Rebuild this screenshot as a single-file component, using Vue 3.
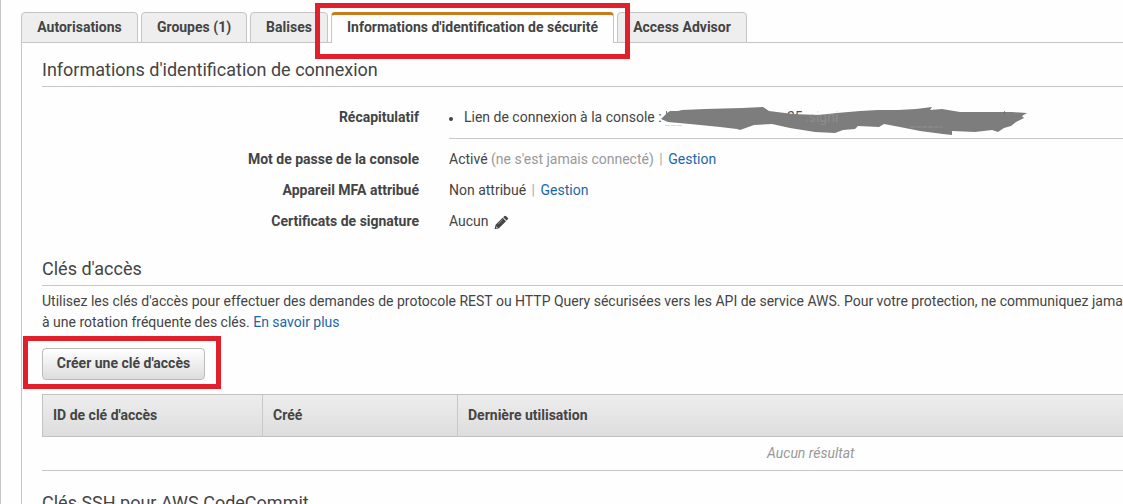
<script setup>
const tabs = [
  { label: 'Autorisations', width: 117 },
  { label: 'Groupes (1)', width: 106 },
  { label: 'Balises', width: 78 },
  { label: "Informations d'identification de sécurité", width: 283, active: true },
  { label: 'Access Advisor', width: 130 },
]
const columns = ["ID de clé d'accès", 'Créé', 'Dernière utilisation']
</script>

<template>
  <div class="page">
    <nav class="tabs">
      <div
        v-for="tab in tabs"
        :key="tab.label"
        class="tab"
        :class="{ active: tab.active }"
        :style="{ width: tab.width + 'px' }"
      >
        <span>{{ tab.label }}</span>
        <i v-if="tab.active" class="marker tab-marker"></i>
      </div>
    </nav>

    <main class="panel">
      <h2>Informations d'identification de connexion</h2>
      <dl class="details">
        <dt>Récapitulatif</dt>
        <dd class="summary">
          <span class="bullet"></span>
          <span>Lien de connexion à la console :</span>
          <svg class="scribble" width="370" height="32" viewBox="0 0 370 32">
            <text class="trace" x="127" y="18">25</text>
            <path fill="none" stroke="#777" d="M6.5 7 V12" />
            <path
              fill="#7d7d7d"
              d="M1 15 L7 9 L10 7 L18 7 L22 6 L45 5 L82 4 L103 3 L109 7 L133 10 L158 11 L177 9 L200 7 L218 6 L238 6 L256 5 L272 3 L270 6 L282 5 L300 8 L325 8 L352 8 L367 9 L362 12 L364 14 L356 18 L351 22 L344 24 L338 28 L332 26 L315 28 L292 27 L292 31 L283 30 L260 27 L240 23 L224 20 L219 23 L198 22 L195 25 L183 26 L175 29 L155 28 L130 24 L112 20 L94 21 L80 26 L77 25 L60 23 L30 20 L8 18 Z"
            />
            <path fill="none" stroke="#aaa" stroke-dasharray="5 1" d="M5 21.5 H22 M250 23 H282" opacity=".45" />
            <path fill="none" stroke="#5d5d5d" opacity=".7" d="M344.5 7 v3" />
            <text class="trace light" x="145" y="18">.signi</text>
          </svg>
        </dd>
        <dt>Mot de passe de la console</dt>
        <dd>Activé <span class="muted">(ne s'est jamais connecté)</span><span class="bar">|</span><a>Gestion</a></dd>
        <dt>Appareil MFA attribué</dt>
        <dd>Non attribué<span class="bar">|</span><a>Gestion</a></dd>
        <dt>Certificats de signature</dt>
        <dd class="certificate">
          Aucun
          <svg width="15" height="15" viewBox="0 0 15 15">
            <path fill="#444" d="M10.2 1.2 Q11.2 .4 12.2 1.2 L13.7 2.7 Q14.5 3.7 13.6 4.6 L12.6 5.6 L9.2 2.2 Z M8.6 2.8 L12 6.2 L4.9 13.2 L.6 14.3 L1.6 9.8 Z" />
            <path fill="none" stroke="#aaa" stroke-width=".8" d="M4.2 9 L8.4 4.9" />
            <path fill="#ddd" d="M2.3 11.2 L3.8 12.7 L2 13.1 Z" />
          </svg>
        </dd>
      </dl>

      <h2>Clés d'accès</h2>
      <p>
        Utilisez les clés d'accès pour effectuer des demandes de protocole REST ou HTTP Query sécurisées vers les API de service AWS. Pour votre protection, ne communiquez jama<br />
        à une rotation fréquente des clés. <a>En savoir plus</a>
      </p>
      <div class="action">
        <button>Créer une clé d'accès</button>
        <i class="marker button-marker"></i>
      </div>
      <div class="table-head">
        <div v-for="column in columns" :key="column">{{ column }}</div>
      </div>
      <div class="empty">Aucun résultat</div>
      <h2 class="ssh">Clés SSH pour AWS CodeCommit</h2>
    </main>
  </div>
</template>

<style>
body { margin: 0; overflow: hidden; }
</style>

<style scoped>
* { box-sizing: border-box; }
.page {
  width: 1123px;
  height: 504px;
  overflow: hidden;
  padding: 12px 0 0 20px;
  border-left: 1px solid #c4c4c4;
  background: #fefefe;
  color: #444;
  font: 14px/21px Roboto, "Liberation Sans", sans-serif;
}
.tabs { display: flex; gap: 3px; height: 31px; position: relative; z-index: 1; }
.tab {
  position: relative;
  height: 31px;
  border: 1px solid #c5c5c5;
  border-radius: 4px 4px 0 0;
  background: #eee;
  font-weight: 700;
  line-height: 29px;
  text-align: center;
  white-space: nowrap;
}
.tab.active {
  z-index: 2;
  border-top: 3px solid #c77c1e;
  border-bottom: 0;
  background: #fefefe;
  line-height: 25px;
}
.marker { position: absolute; border: 5px solid #e2202c; pointer-events: none; }
.tab-marker { left: -17px; top: -12px; width: 315px; height: 56px; }
.panel {
  height: 480px;
  margin-top: -1px;
  padding: 14px 0 0 20px;
  border: 1px solid #c5c5c5;
  border-width: 1px 0 0 1px;
}
h2 {
  height: 30px;
  margin: 0;
  border-bottom: 1px solid #c8c8c8;
  font-size: 18px;
  font-weight: 400;
  line-height: 26px;
}
.details {
  display: grid;
  grid-template-columns: 377px 1fr;
  grid-template-rows: 52px 31px 31px 31px;
  column-gap: 30px;
  height: 169px;
  margin: 0;
  line-height: 21px;
}
dt { font-weight: 700; text-align: right; }
dt, dd { margin: 0; padding-top: 10px; white-space: nowrap; }
dt:first-child, .summary { padding-top: 20px; }
.summary { position: relative; display: flex; border-bottom: 1px solid #c8c8c8; }
.bullet { flex: none; width: 4px; height: 4px; margin: 10px 11px 0 0; border-radius: 50%; background: #444; }
.scribble { position: absolute; left: 211px; top: 17px; }
.trace { fill: #555; font-size: 14px; }
.trace.light { fill: #aaa; opacity: .35; }
.muted { color: #999; }
.bar { margin: 0 5.5px; color: #aaa; }
a { color: #1b66a5; }
.certificate { display: flex; gap: 5px; }
.certificate svg { margin-top: 4px; }
p { margin: 5px 0 0; white-space: nowrap; }
.action { position: relative; height: 62px; padding-top: 15px; }
button {
  display: block;
  width: 163px;
  height: 32px;
  padding: 0 0 2px;
  border: 1px solid #bbb;
  border-radius: 4px;
  background: linear-gradient(#fff, #ddd);
  color: #444;
  font: 700 14px/28px Roboto, "Liberation Sans", sans-serif;
}
.button-marker { left: -19px; top: 3px; width: 198px; height: 53px; }
.table-head {
  display: grid;
  grid-template-columns: 220px 195px 1fr;
  height: 43px;
  margin-top: -1px;
  border: 1px solid #c2c2c2;
  border-right: 0;
  background: linear-gradient(#ededed, #ddd);
  font-weight: 700;
}
.table-head div { padding-left: 10px; border-right: 1px solid #c8c8c8; line-height: 41px; }
.table-head div:last-child { border: 0; }
.empty {
  height: 34px;
  padding-left: 725px;
  border-bottom: 1px solid #c8c8c8;
  color: #999;
  font-style: italic;
  line-height: 33px;
}
.ssh { margin-top: 19px; }
</style>
